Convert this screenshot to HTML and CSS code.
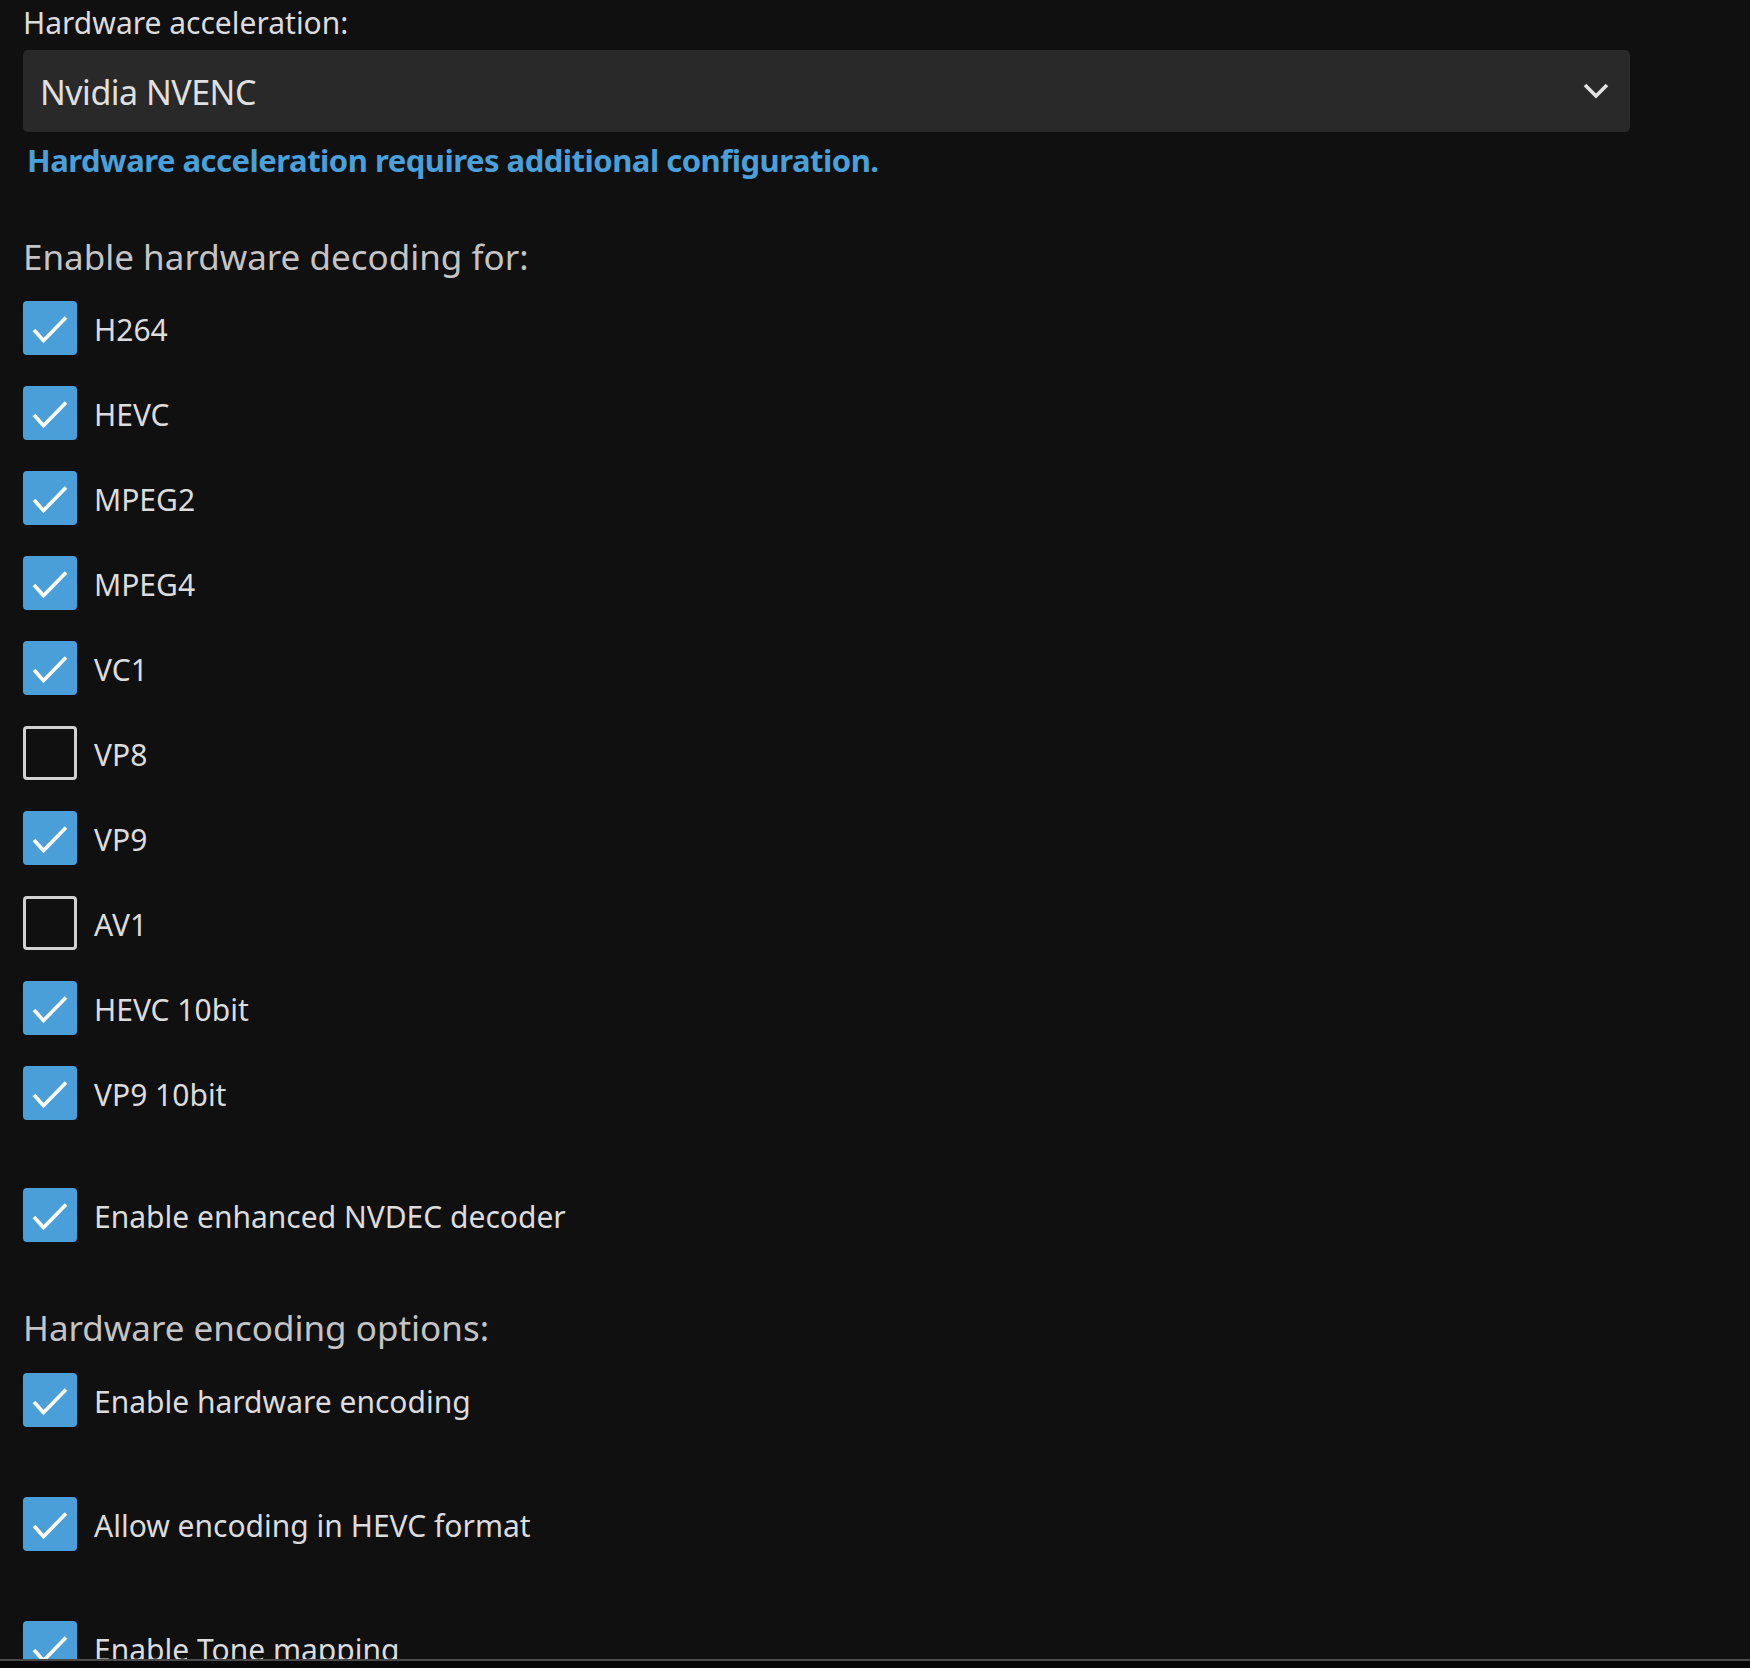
FILE: index.html
```html
<!DOCTYPE html>
<html lang="en">
<head>
<meta charset="utf-8">
<title>Transcoding</title>
<link rel="stylesheet" href="styles.css">
</head>
<body>
<main class="page">
  <label class="field-label">Hardware acceleration:</label>
  <div class="select">
    <span class="select-value">Nvidia NVENC</span>
    <svg class="chevron" width="26" height="16" viewBox="0 0 26 16"><path d="M2 2 L13 13 L24 2" fill="none" stroke="#e2e2e2" stroke-width="3.6"/></svg>
  </div>
  <a class="help-link">Hardware acceleration requires additional configuration.</a>

  <h2 class="section-title first">Enable hardware decoding for:</h2>
  <ul class="checks">
    <li class="check"><span class="box on"><svg viewBox="0 0 54 54"><path d="M11 29 L20.5 39.5 L43 16.5" /></svg></span><span class="check-label">H264</span></li>
    <li class="check"><span class="box on"><svg viewBox="0 0 54 54"><path d="M11 29 L20.5 39.5 L43 16.5" /></svg></span><span class="check-label">HEVC</span></li>
    <li class="check"><span class="box on"><svg viewBox="0 0 54 54"><path d="M11 29 L20.5 39.5 L43 16.5" /></svg></span><span class="check-label">MPEG2</span></li>
    <li class="check"><span class="box on"><svg viewBox="0 0 54 54"><path d="M11 29 L20.5 39.5 L43 16.5" /></svg></span><span class="check-label">MPEG4</span></li>
    <li class="check"><span class="box on"><svg viewBox="0 0 54 54"><path d="M11 29 L20.5 39.5 L43 16.5" /></svg></span><span class="check-label">VC1</span></li>
    <li class="check"><span class="box off"></span><span class="check-label">VP8</span></li>
    <li class="check"><span class="box on"><svg viewBox="0 0 54 54"><path d="M11 29 L20.5 39.5 L43 16.5" /></svg></span><span class="check-label">VP9</span></li>
    <li class="check"><span class="box off"></span><span class="check-label">AV1</span></li>
    <li class="check"><span class="box on"><svg viewBox="0 0 54 54"><path d="M11 29 L20.5 39.5 L43 16.5" /></svg></span><span class="check-label">HEVC 10bit</span></li>
    <li class="check"><span class="box on"><svg viewBox="0 0 54 54"><path d="M11 29 L20.5 39.5 L43 16.5" /></svg></span><span class="check-label">VP9 10bit</span></li>
  </ul>
  <div class="check standalone"><span class="box on"><svg viewBox="0 0 54 54"><path d="M11 29 L20.5 39.5 L43 16.5" /></svg></span><span class="check-label">Enable enhanced NVDEC decoder</span></div>

  <h2 class="section-title">Hardware encoding options:</h2>
  <ul class="checks spaced">
    <li class="check"><span class="box on"><svg viewBox="0 0 54 54"><path d="M11 29 L20.5 39.5 L43 16.5" /></svg></span><span class="check-label">Enable hardware encoding</span></li>
    <li class="check"><span class="box on"><svg viewBox="0 0 54 54"><path d="M11 29 L20.5 39.5 L43 16.5" /></svg></span><span class="check-label">Allow encoding in HEVC format</span></li>
    <li class="check"><span class="box on"><svg viewBox="0 0 54 54"><path d="M11 29 L20.5 39.5 L43 16.5" /></svg></span><span class="check-label">Enable Tone mapping</span></li>
  </ul>
</main>
<div class="bottom-bar"></div>
</body>
</html>
```

FILE: styles.css
```css
html, body {
  margin: 0;
  padding: 0;
  background: #101010;
  height: 100%;
  overflow: hidden;
}

body {
  font-family: "Noto Sans", "Open Sans", sans-serif;
  color: #dcdcdc;
}

.page {
  padding: 3px 120px 0 23px;
  display: flex;
  flex-direction: column;
  align-items: flex-start;
}

.field-label {
  display: block;
  font-size: 30px;
  line-height: 40px;
  color: #dcdcdc;
}

.select {
  margin-top: 7px;
  align-self: stretch;
  height: 82px;
  background: #292929;
  border-radius: 5px;
  display: flex;
  align-items: center;
  justify-content: space-between;
  padding: 0 21px 0 17px;
}

.select-value {
  font-size: 34px;
  line-height: 44px;
  letter-spacing: -0.5px;
  padding-top: 2px;
  color: #e0e0e0;
}

.chevron {
  display: block;
}

.help-link {
  margin: 8px 0 0 4px;
  font-size: 31px;
  line-height: 40px;
  font-weight: 700;
  letter-spacing: -0.5px;
  color: #4aa0da;
}

.section-title {
  margin: 62px 0 0;
  font-size: 35px;
  line-height: 48px;
  font-weight: 400;
  color: #c4c4c4;
}

.section-title.first {
  margin-top: 53px;
}

.checks {
  list-style: none;
  margin: 20px 0 0;
  padding: 0;
  display: flex;
  flex-direction: column;
  gap: 31px;
}

.checks.spaced {
  margin-top: 21px;
  gap: 70px;
}

.check {
  display: flex;
  align-items: center;
  gap: 17px;
  height: 54px;
}

.check.standalone {
  margin-top: 68px;
}

.box {
  box-sizing: border-box;
  width: 54px;
  height: 54px;
  border-radius: 4px;
  flex: none;
}

.box.on {
  background: #4a9fd9;
}

.box.off {
  border: 3px solid #d2d2d2;
}

.box svg {
  display: block;
  width: 54px;
  height: 54px;
}

.box svg path {
  fill: none;
  stroke: #ffffff;
  stroke-width: 3.6;
}

.check-label {
  font-size: 30px;
  line-height: 40px;
  padding-top: 3px;
  color: #dcdcdc;
}

.bottom-bar {
  position: fixed;
  left: 0;
  right: 0;
  bottom: 0;
  height: 7px;
  border-top: 2px solid #4a4a4a;
  background: #080808;
}
```
